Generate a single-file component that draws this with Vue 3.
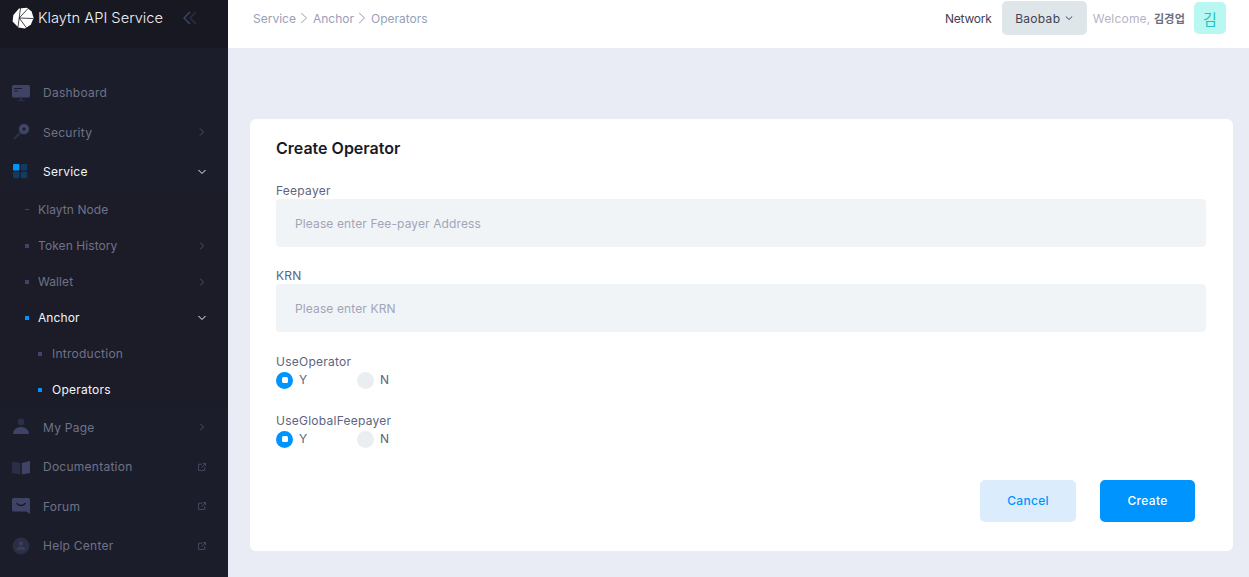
<script setup>
const subItems = [
  { label: 'Klaytn Node', mark: 'dash' },
  { label: 'Token History', arrow: true },
  { label: 'Wallet', arrow: true },
  { label: 'Anchor', open: true, active: true }
]
const bottomItems = [
  { label: 'My Page', icon: 'user', arrow: true },
  { label: 'Documentation', icon: 'book', ext: true },
  { label: 'Forum', icon: 'chat', ext: true },
  { label: 'Help Center', icon: 'help', ext: true }
]
const radios = [
  { label: 'UseOperator' },
  { label: 'UseGlobalFeepayer' }
]
</script>

<template>
  <div class="page">
    <aside class="sidebar">
      <div class="brand">
        <svg class="logo" viewBox="0 0 22 22" width="22" height="22">
          <path fill="#fff" d="M7 1.500 15 .8l4.600 3.600 2 6.600-2.800 6.800-6 3.600-6.400-1L.6 14.400 1.400 8z" />
          <path fill="none" stroke="#16171f" stroke-width="0.8" d="M8.500 1 6 20M7.200 11 16 1.500M7.200 11l7 9.500M7.200 11 21 11.500" />
        </svg>
        <span class="brand-name">Klaytn API Service</span>
        <svg class="collapse" viewBox="0 0 16 16" width="16" height="16" fill="none" stroke-width="1.400">
          <path stroke="#3c4670" d="M8 2 2 8l6 6" />
          <path stroke="#2b3048" d="M14 2 8 8l6 6" />
        </svg>
      </div>

      <nav class="nav">
        <a class="item">
          <svg class="ico" viewBox="0 0 18 18" width="18" height="18">
            <rect y="1" width="18" height="12.500" rx="1.500" fill="#3f4467" />
            <path stroke="#1c1d2a" d="M2 4.500h8M2 7h4" />
            <path fill="#2b2e45" d="M8 13.500h2V16H8zM5.500 16h7v1h-7z" />
          </svg>
          <span>Dashboard</span>
        </a>
        <a class="item">
          <svg class="ico" viewBox="0 0 18 18" width="18" height="18">
            <path stroke="#2b2e45" stroke-width="2.400" stroke-linecap="round" d="M2.500 15.500 9 9" />
            <circle cx="12" cy="6" r="5.200" fill="#3f4467" />
            <circle cx="12" cy="6" r="1.500" fill="#1c1d2a" />
          </svg>
          <span>Security</span>
          <svg class="chev" viewBox="0 0 8 8" width="8" height="8"><path d="M2 .5 5.500 4 2 7.500" /></svg>
        </a>
        <a class="item on">
          <svg class="ico" viewBox="0 0 18 18" width="18" height="18">
            <rect x="1" y="1" width="6.400" height="6.400" rx="1" fill="#0094ff" />
            <rect x="8.800" y="1" width="6.400" height="6.400" rx="1" fill="#0f3c5f" />
            <rect x="1" y="8.800" width="6.400" height="6.400" rx="1" fill="#0f3c5f" />
            <rect x="8.800" y="8.800" width="6.400" height="6.400" rx="1" fill="#0f3c5f" />
          </svg>
          <span>Service</span>
          <svg class="chev" viewBox="0 0 8 8" width="8" height="8"><path d="M.5 2 4 5.500 7.500 2" /></svg>
        </a>

        <div class="subnav">
          <a v-for="s in subItems" :key="s.label" class="sub" :class="{ on: s.active }">
            <i class="mark" :class="{ dash: s.mark === 'dash' }"></i>
            <span>{{ s.label }}</span>
            <svg v-if="s.arrow" class="chev" viewBox="0 0 8 8" width="8" height="8"><path d="M2 .5 5.500 4 2 7.500" /></svg>
            <svg v-if="s.open" class="chev" viewBox="0 0 8 8" width="8" height="8"><path d="M.5 2 4 5.500 7.500 2" /></svg>
          </a>
          <a class="sub deep">
            <i class="mark"></i>
            <span>Introduction</span>
          </a>
          <a class="sub deep on">
            <i class="mark"></i>
            <span>Operators</span>
          </a>
        </div>

        <a v-for="b in bottomItems" :key="b.label" class="item">
          <svg v-if="b.icon === 'user'" class="ico" viewBox="0 0 18 18" width="18" height="18">
            <circle cx="9" cy="4" r="3.400" fill="#2b2e45" />
            <path fill="#3f4467" d="M1 16c0-4 3.400-7 8-7s8 3 8 7z" />
          </svg>
          <svg v-if="b.icon === 'book'" class="ico" viewBox="0 0 18 18" width="18" height="18">
            <path fill="#2b2e45" d="M0 3.500 8.200 5v11.500L0 15z" />
            <path fill="#3f4467" d="M9.800 5 18 3v12l-8.200 1.500z" />
          </svg>
          <svg v-if="b.icon === 'chat'" class="ico" viewBox="0 0 18 18" width="18" height="18">
            <path fill="#3f4467" d="M1.500 1h15A1.500 1.500 0 0 1 18 2.500V17l-3.500-2.500h-13A1.500 1.500 0 0 1 0 13V2.500A1.500 1.500 0 0 1 1.500 1z" />
            <path fill="none" stroke="#14151f" stroke-width="1.400" stroke-linecap="round" d="M5 6.500c1.500 2.700 6.500 2.700 8 0" />
          </svg>
          <svg v-if="b.icon === 'help'" class="ico" viewBox="0 0 18 18" width="18" height="18">
            <circle cx="9" cy="9" r="8.500" fill="#2b2e45" />
            <circle cx="9" cy="6.500" r="2.200" fill="#3a3e5c" />
            <path fill="#3a3e5c" d="M4.500 13c0-2.300 2-3.500 4.500-3.500s4.500 1.200 4.500 3.500z" />
          </svg>
          <span>{{ b.label }}</span>
          <svg v-if="b.arrow" class="chev" viewBox="0 0 8 8" width="8" height="8"><path d="M2 .5 5.500 4 2 7.500" /></svg>
          <svg v-if="b.ext" class="ext" viewBox="0 0 8 8" width="8" height="8">
            <path d="M4 1.200H.6v6.200h6.200V4M3.400 4.600 7.600.4M5 .4h2.600V3" />
          </svg>
        </a>
      </nav>
    </aside>

    <div class="body">
      <header class="topbar">
        <div class="crumbs">
          <span>Service</span>
          <svg viewBox="0 0 8 12" width="8" height="12"><path d="M1.200 1 6.500 6l-5.300 5" /></svg>
          <span>Anchor</span>
          <svg viewBox="0 0 8 12" width="8" height="12"><path d="M1.200 1 6.500 6l-5.300 5" /></svg>
          <span>Operators</span>
        </div>
        <span class="net-label">Network</span>
        <div class="net-select">
          Baobab
          <svg viewBox="0 0 8 8" width="8" height="8"><path d="M.8 2.500 4 5.500l3.200-3" /></svg>
        </div>
        <span class="welcome">Welcome, <b>김경업</b></span>
        <div class="avatar">김</div>
      </header>

      <main class="content">
        <section class="card">
          <h1>Create Operator</h1>

          <label class="field-label">Feepayer</label>
          <input class="field" type="text" placeholder="Please enter Fee-payer Address" />

          <label class="field-label">KRN</label>
          <input class="field" type="text" placeholder="Please enter KRN" />

          <div v-for="r in radios" :key="r.label" class="radio-group">
            <div class="field-label tight">{{ r.label }}</div>
            <div class="radios">
              <span class="radio"><i class="dot checked"></i><span class="radio-text">Y</span></span>
              <span class="radio"><i class="dot"></i><span class="radio-text">N</span></span>
            </div>
          </div>

          <div class="actions">
            <button class="btn cancel">Cancel</button>
            <button class="btn create">Create</button>
          </div>
        </section>
      </main>
    </div>
  </div>
</template>

<style>
html, body {
  margin: 0;
  height: 100%;
  overflow: hidden;
}
</style>

<style scoped>
.page {
  display: flex;
  width: 1249px;
  height: 577px;
  overflow: hidden;
  font-family: Inter, "Noto Sans CJK KR", sans-serif;
  font-size: 12px;
  background: #e9ecf5;
}

/* sidebar */
.sidebar {
  width: 228px;
  flex: none;
  background: #1c1d2a;
}
.brand {
  display: flex;
  align-items: center;
  height: 48px;
  padding: 0 0 12px 12px;
  box-sizing: border-box;
  background: #171822;
}
.logo {
  flex: none;
}
.brand-name {
  margin-left: 4px;
  color: #f2f2f5;
  font-size: 14.700px;
  font-weight: 300;
  white-space: nowrap;
}
.collapse {
  margin-left: 19px;
}
.nav {
  padding-top: 25px;
}
.item,
.sub {
  display: flex;
  align-items: center;
  color: #6f7288;
}
.item {
  height: 39.500px;
  padding: 0 22px 0 12px;
  letter-spacing: 0.25px;
}
.item .ico {
  flex: none;
  margin-right: 13px;
}
.item span,
.sub span {
  flex: 1;
}
.item.on,
.sub.on {
  color: #f4f5f8;
}
.subnav {
  background: #1b1c28;
}
.sub {
  height: 36px;
  padding: 0 22px 0 25px;
  letter-spacing: 0.08px;
}
.sub.deep {
  padding-left: 38px;
  letter-spacing: 0.25px;
}
.mark {
  width: 4px;
  height: 4px;
  margin-right: 9px;
  background: #3f4467;
}
.sub.deep .mark {
  margin-right: 10px;
}
.mark.dash {
  height: 1px;
}
.sub.on .mark {
  background: #0094ff;
}
.chev {
  fill: none;
  stroke: #4a4e6a;
  stroke-width: 1;
}
.on > .chev {
  stroke: #f4f5f8;
}
.ext {
  fill: none;
  stroke: #4a4e6a;
  stroke-width: 0.9;
}

/* top bar */
.body {
  flex: 1;
  min-width: 0;
}
.topbar {
  display: flex;
  align-items: center;
  height: 48px;
  padding: 0 23px 12px 25px;
  box-sizing: border-box;
  background: #fff;
}
.crumbs {
  display: flex;
  align-items: center;
  gap: 4.500px;
  flex: 1;
  color: #98a0b8;
}
.crumbs svg {
  fill: none;
  stroke: #98a0b8;
}
.net-label {
  color: #3f4254;
  letter-spacing: -0.2px;
}
.net-select {
  display: flex;
  align-items: center;
  justify-content: center;
  gap: 5px;
  width: 85px;
  height: 34px;
  margin: 0 6px 0 10px;
  border-radius: 5px;
  background: #dfe6e9;
  color: #3f4254;
  letter-spacing: 0.3px;
}
.net-select svg {
  fill: none;
  stroke: #3f4254;
}
.welcome {
  color: #b5b5c3;
  letter-spacing: 0.2px;
  white-space: nowrap;
}
.welcome b {
  color: #6c6f80;
  font-size: 11px;
}
.avatar {
  display: flex;
  align-items: center;
  justify-content: center;
  width: 32px;
  height: 32px;
  margin-left: 9px;
  border-radius: 5px;
  background: #b9f7f2;
  color: #1bc5bd;
  font-size: 15px;
}

/* form */
.content {
  padding: 71px 16px 0 22px;
}
.card {
  height: 432px;
  padding: 20px 27px 0 26px;
  box-sizing: border-box;
  border-radius: 6px;
  background: #fff;
}
h1 {
  margin: 0 0 26px;
  color: #1a1a27;
  font-size: 16px;
  font-weight: 600;
  line-height: 18px;
}
.field-label {
  display: block;
  color: #5e6480;
  font-size: 12px;
  line-height: 16px;
  letter-spacing: 0.25px;
}
.field {
  display: block;
  width: 100%;
  height: 48px;
  margin: 0 0 21px;
  padding: 0 19px;
  box-sizing: border-box;
  border: 0;
  border-radius: 4px;
  outline: 0;
  background: #f1f4f7;
  font: inherit;
  letter-spacing: 0.12px;
}
.field::placeholder {
  color: #a1a5b7;
  opacity: 1;
}
.radio-group {
  margin-bottom: 24px;
}
.field + .radio-group {
  margin-top: 22px;
}
.field-label.tight {
  margin-bottom: 1px;
}
.radios {
  display: flex;
  height: 18px;
}
.radio {
  display: flex;
  align-items: center;
  width: 81px;
  gap: 6px;
  color: #5e6278;
}
.radio-text {
  padding-bottom: 2px;
}
.dot {
  width: 17px;
  height: 17px;
  border-radius: 50%;
  background: #ebeef1;
}
.dot.checked {
  display: flex;
  align-items: center;
  justify-content: center;
  background: #0094ff;
}
.dot.checked::after {
  content: "";
  width: 6px;
  height: 6px;
  border-radius: 1.500px;
  background: #fff;
}
.actions {
  display: flex;
  justify-content: flex-end;
  gap: 24px;
  margin-top: 32px;
  padding-right: 11px;
}
.btn {
  width: 96px;
  height: 42px;
  padding: 0 0 2px;
  border: 0;
  border-radius: 5px;
  font: inherit;
  font-weight: 500;
  letter-spacing: 0.3px;
}
.cancel {
  background: #dbedfd;
  color: #0094ff;
}
.create {
  width: 95px;
  background: #0094ff;
  color: #fff;
}
</style>
